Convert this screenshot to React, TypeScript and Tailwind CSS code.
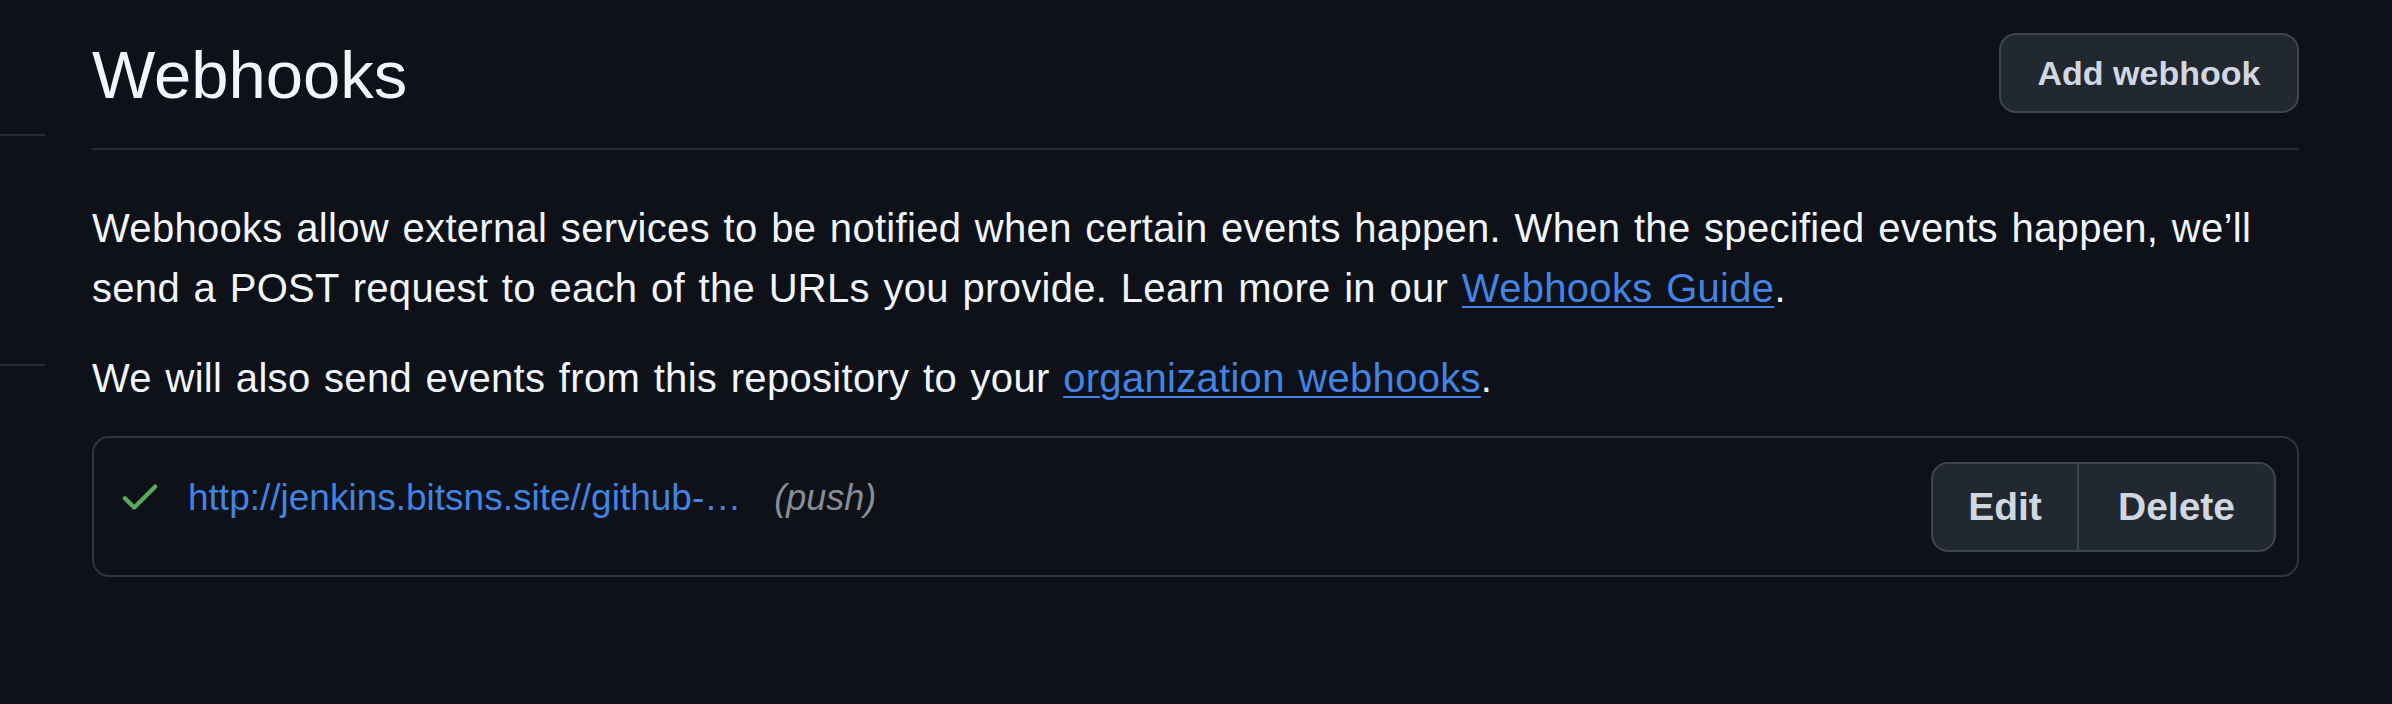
import { useState } from "react";

type Hook = {
  id: number;
  url: string;
  events: string;
  ok: boolean;
};

const CheckIcon = () => (
  <svg viewBox="0 0 16 16" className="w-[46px] h-[46px] shrink-0" fill="#57ab5a">
    <path d="M13.78 4.22a.75.75 0 0 1 0 1.06l-7.25 7.25a.75.75 0 0 1-1.06 0L2.22 9.28a.751.751 0 0 1 .018-1.042.751.751 0 0 1 1.042-.018L6 10.94l6.72-6.72a.75.75 0 0 1 1.06 0Z" />
  </svg>
);

const HookRow = ({ hook }: { hook: Hook }) => {
  return (
    <div className="flex justify-between items-start border-2 border-[#30363d] rounded-[17px] pl-[23px] pr-[21px] pt-[24px] pb-[23px]">
      <div className="flex items-center mt-[11px] h-[46px]">
        {hook.ok && <CheckIcon />}
        <a
          href="#"
          className="ml-[25px] text-[37px] leading-[46px] text-[#4184e4] mt-[3px]"
        >
          {hook.url}
        </a>
        <span className="ml-[33px] text-[36px] leading-[46px] italic text-[#868d96] mt-[3px]">
          ({hook.events})
        </span>
      </div>
      <div className="flex h-[90px] border-2 border-[#3d444d] rounded-[17px] bg-[#212830] text-[39px] font-semibold text-[#d1d7e0] overflow-hidden">
        <button className="w-[144px] flex items-center justify-center">
          Edit
        </button>
        <button className="w-[197px] flex items-center justify-center border-l-2 border-[#3d444d]">
          Delete
        </button>
      </div>
    </div>
  );
};

const App = () => {
  const [hooks] = useState<Hook[]>([
    {
      id: 1,
      url: "http://jenkins.bitsns.site//github-…",
      events: "push",
      ok: true,
    },
  ]);

  return (
    <div
      className="flex min-h-[704px] bg-[#0e1117] text-[#f0f6fc]"
      style={{ fontFamily: '"Liberation Sans", Arial, sans-serif' }}
    >
      {/* cut off settings nav on the left */}
      <div className="w-[45px] shrink-0">
        <div className="h-[136px] border-b-2 border-[#262b33]"></div>
        <div className="h-[230px] border-b-2 border-[#262b33]"></div>
      </div>

      <div className="ml-[47px] w-[2207px]">
        <div className="flex justify-between items-center pt-[33px] pb-[35px] border-b-2 border-[#262b33]">
          <h2 className="text-[67px] leading-none font-normal mt-[2px]">Webhooks</h2>
          <button className="w-[300px] h-[80px] rounded-[17px] border-2 border-[#3d444d] bg-[#212830] text-[34px] font-semibold text-[#d1d7e0]">
            Add webhook
          </button>
        </div>

        <div className="text-[40px] leading-[60px] tracking-[0.3px] [word-spacing:2.2px]">
          <p className="mt-[48px]">
            Webhooks allow external services to be notified when certain
            events happen. When the specified events happen, we’ll send a POST
            request to each of the URLs you provide. Learn more in our{" "}
            <a
              href="#"
              className="text-[#4184e4] underline decoration-2 underline-offset-[4px]"
            >
              Webhooks Guide
            </a>
            .
          </p>
          <p className="mt-[30px]">
            We will also send events from this repository to your{" "}
            <a
              href="#"
              className="text-[#4184e4] underline decoration-2 underline-offset-[4px]"
            >
              organization webhooks
            </a>
            .
          </p>
        </div>

        <div className="mt-[28px]">
          {hooks.map((h) => (
            <HookRow key={h.id} hook={h} />
          ))}
        </div>
      </div>
    </div>
  );
};

export default App;
